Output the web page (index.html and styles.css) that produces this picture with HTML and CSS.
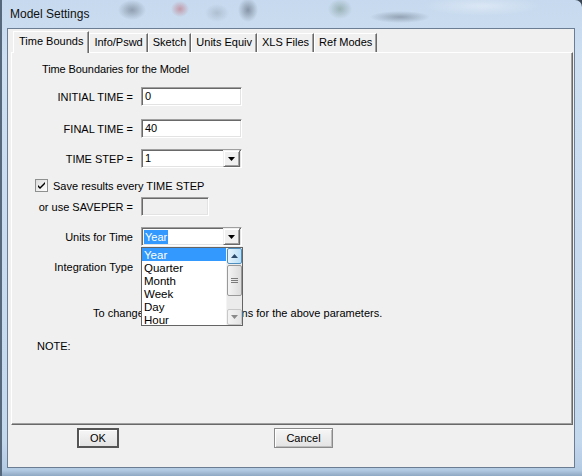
FILE: index.html
```html
<!DOCTYPE html>
<html>
<head>
<meta charset="utf-8">
<title>Model Settings</title>
<link rel="stylesheet" href="styles.css">
</head>
<body>
<div class="window">
  <div class="titlebar"><span class="title">Model Settings</span></div>
  <div class="client">
    <div class="tabs">
      <div class="tab active">Time Bounds</div>
      <div class="tab">Info/Pswd</div>
      <div class="tab">Sketch</div>
      <div class="tab">Units Equiv</div>
      <div class="tab">XLS Files</div>
      <div class="tab">Ref Modes</div>
    </div>
    <div class="panel">
      <div class="heading">Time Boundaries for the Model</div>
      <div class="form">
        <div class="row r1">
          <span class="label">INITIAL TIME =</span>
          <div class="field text">0</div>
        </div>
        <div class="row r2">
          <span class="label">FINAL TIME =</span>
          <div class="field text">40</div>
        </div>
        <div class="row r3">
          <span class="label">TIME STEP =</span>
          <div class="field combo"><span class="value">1</span><span class="dropbtn"><svg width="7" height="4" viewBox="0 0 7 4"><path d="M0 0h7L3.5 4z" fill="#000"/></svg></span></div>
        </div>
        <div class="row check-row">
          <span class="checkbox"><svg width="9" height="9" viewBox="0 0 9 9"><path d="M1 4l2 2 5-5v2L3 8 1 6z" fill="#000"/></svg></span>
          <span>Save results every TIME STEP</span>
        </div>
        <div class="row r5">
          <span class="label">or use SAVEPER =</span>
          <div class="field text disabled"></div>
        </div>
        <div class="row r6">
          <span class="label">Units for Time</span>
          <div class="combo-wrap">
            <div class="field combo"><span class="value selected">Year</span><span class="dropbtn"><svg width="7" height="4" viewBox="0 0 7 4"><path d="M0 0h7L3.5 4z" fill="#000"/></svg></span></div>
            <div class="dropdown">
              <ul class="items">
                <li class="hl">Year</li>
                <li>Quarter</li>
                <li>Month</li>
                <li>Week</li>
                <li>Day</li>
                <li>Hour</li>
              </ul>
              <div class="scrollbar">
                <span class="sb-btn up"><svg width="7" height="4" viewBox="0 0 7 4"><path d="M0 4h7L3.5 0z" fill="#2b4a6a"/></svg></span>
                <span class="thumb"><svg width="7" height="6" viewBox="0 0 7 6"><path d="M0 0.5h7M0 2.5h7M0 4.5h7" stroke="#7a7a7a" stroke-width="1"/></svg></span>
                <span class="track"></span>
                <span class="sb-btn down"><svg width="7" height="4" viewBox="0 0 7 4"><path d="M0 0h7L3.5 4z" fill="#8a8a8a"/></svg></span>
              </div>
            </div>
          </div>
        </div>
        <div class="row r7">
          <span class="label">Integration Type</span>
          <div class="field combo"><span class="value"></span><span class="dropbtn"><svg width="7" height="4" viewBox="0 0 7 4"><path d="M0 0h7L3.5 4z" fill="#000"/></svg></span></div>
        </div>
      </div>
      <p class="change">To change the simulation options for the above parameters.</p>
      <p class="note">NOTE:</p>
    </div>
    <div class="buttons">
      <button class="btn default">OK</button>
      <button class="btn cancel">Cancel</button>
    </div>
  </div>
</div>
</body>
</html>
```

FILE: styles.css
```css
* { box-sizing: border-box; }
html, body { margin: 0; padding: 0; }
body {
  width: 582px;
  height: 476px;
  overflow: hidden;
  background: #3a4654;
  font-family: "Liberation Sans", Arial, sans-serif;
  font-size: 11px;
  color: #000;
}
.window {
  width: 582px;
  height: 476px;
  display: flex;
  flex-direction: column;
  border-left: 2px solid #56687b;
  border-radius: 0 7px 0 0;
  background: linear-gradient(to bottom, #c6d9ee 0, #cddff1 60px, #c4d8ed 440px, #b4cbe4 470px, #8ea7c2 476px);
}
.titlebar {
  height: 28px;
  flex: none;
  display: flex;
  align-items: center;
  padding-left: 8px;
  background:
    radial-gradient(ellipse 14px 10px at 130px 10px, rgba(90,100,115,0.5), rgba(90,100,115,0) 100%),
    radial-gradient(ellipse 9px 8px at 178px 9px, rgba(190,90,100,0.5), rgba(190,90,100,0) 100%),
    radial-gradient(ellipse 12px 9px at 215px 13px, rgba(120,130,145,0.3), rgba(120,130,145,0) 100%),
    radial-gradient(ellipse 10px 12px at 246px 10px, rgba(70,80,95,0.5), rgba(70,80,95,0) 100%),
    radial-gradient(ellipse 12px 10px at 338px 9px, rgba(90,120,100,0.4), rgba(90,120,100,0) 100%),
    radial-gradient(ellipse 30px 6px at 398px 17px, rgba(70,80,95,0.4), rgba(70,80,95,0) 100%),
    radial-gradient(ellipse 60px 10px at 480px 6px, rgba(255,255,255,0.35), rgba(255,255,255,0) 100%);
}
.title { font-size: 12px; color: #111; }
.client {
  flex: 1;
  margin: 0 7px 8px 5px;
  border: 1px solid #6b7d92;
  background: #f0f0f0;
  padding: 2px 1px 0 3px;
  display: flex;
  flex-direction: column;
}
.tabs {
  height: 21px;
  display: flex;
  align-items: flex-end;
  padding-left: 2px;
  position: relative;
  z-index: 2;
}
.tab {
  height: 19px;
  line-height: 17px;
  padding: 0 4px;
  border-top: 1px solid #fff;
  border-left: 1px solid #fff;
  border-right: 1px solid #696969;
  box-shadow: inset -1px 0 0 #a0a0a0;
  background: #f0f0f0;
  white-space: nowrap;
}
.tab.active {
  height: 22px;
  line-height: 19px;
  margin-bottom: -1px;
  padding: 0 5px;
}
.panel {
  height: 373px;
  border: 1px solid;
  border-color: #fff #696969 #696969 #fff;
  box-shadow: inset -1px -1px 0 #a0a0a0;
  display: flex;
  flex-direction: column;
}
.heading {
  margin: 10px 0 0 30px;
  line-height: 13px;
  letter-spacing: -0.1px;
}
.form {
  margin-top: 11px;
  display: flex;
  flex-direction: column;
}
.row {
  display: flex;
  align-items: center;
  height: 19px;
}
.r2 { margin-top: 13px; }
.r3 { margin-top: 11px; }
.check-row { margin-top: 11px; height: 13px; padding-left: 23px; gap: 5px; }
.r5 { margin-top: 5px; }
.r6 { margin-top: 11px; }
.r7 { margin-top: 11px; }
.label {
  width: 121px;
  text-align: right;
  margin-right: 8px;
  white-space: nowrap;
}
.field {
  width: 101px;
  height: 19px;
  background: #fff;
  border-top: 1px solid #a0a0a0;
  border-left: 1px solid #a0a0a0;
  border-right: 1px solid #fff;
  border-bottom: 1px solid #fff;
  box-shadow: inset 1px 1px 0 #696969, inset -1px -1px 0 #e3e3e3;
  padding: 0 0 0 3px;
  line-height: 17px;
  display: flex;
  align-items: center;
}
.field.disabled {
  width: 68px;
  background: #f0f0f0;
}
.combo { position: relative; }
.combo .value { flex: 1; }
.combo .value.selected { flex: none; background: #3399ff; color: #fff; line-height: 14px; padding: 0 1px; margin-left: -1px; }
.dropbtn {
  margin-left: auto;
  width: 17px;
  height: 17px;
  align-self: flex-start;
  background: #f0f0f0;
  border: 1px solid;
  border-color: #f0f0f0 #696969 #696969 #f0f0f0;
  box-shadow: inset 1px 1px 0 #fff, inset -1px -1px 0 #a0a0a0;
  display: flex;
  align-items: center;
  justify-content: center;
  margin-right: 1px;
}
.combo-wrap { position: relative; }
.dropdown {
  position: absolute;
  left: 0;
  top: 20px;
  width: 102px;
  height: 79px;
  background: #fff;
  border: 1px solid #646464;
  display: flex;
  z-index: 5;
}
.items {
  list-style: none;
  margin: 0;
  padding: 0;
  flex: 1;
}
.items li {
  height: 13px;
  line-height: 14px;
  padding-left: 2px;
  font-size: 11.5px;
}
.items li.hl { background: #3399ff; color: #fff; }
.scrollbar {
  width: 16px;
  display: flex;
  flex-direction: column;
  background: #ebebeb;
  border-left: 1px solid #f4f4f4;
}
.sb-btn {
  height: 16px;
  flex: none;
  display: flex;
  align-items: center;
  justify-content: center;
  border: 1px solid #c8c8c8;
  border-radius: 2px;
  background: linear-gradient(to right, #f4f4f4, #e4e4e4);
}
.sb-btn.up {
  border-color: #4e8fbf;
  background: linear-gradient(to right, #e6f4fc, #b9dff6);
}
.thumb {
  height: 31px;
  flex: none;
  margin-top: 1px;
  border: 1px solid #999;
  border-radius: 2px;
  background: linear-gradient(to right, #f4f4f4, #dcdcdc);
  display: flex;
  align-items: center;
  justify-content: center;
}
.track { flex: 1; }
.checkbox {
  width: 13px;
  height: 13px;
  border: 1px solid #8e8f8f;
  background: linear-gradient(135deg, #dcdcdc, #fff);
  display: flex;
  align-items: center;
  justify-content: center;
}
.change {
  margin: 31px 0 0 81px;
  line-height: 13px;
}
.note {
  margin: 20px 0 0 25px;
  line-height: 13px;
}
.buttons {
  display: flex;
  margin-top: 3px;
  padding-left: 66px;
  gap: 155px;
}
.btn {
  height: 20px;
  font-family: "Liberation Sans", Arial, sans-serif;
  font-size: 11px;
  color: #000;
  padding: 0;
  background: linear-gradient(#f6f6f6, #e3e3e3);
  border: 1px solid #707070;
  border-radius: 0;
}
.btn.default {
  width: 42px;
  border: 2px solid #555;
  box-shadow: inset 1px 1px 0 #fff;
}
.btn.cancel {
  width: 59px;
  border-color: #8a8a8a;
  box-shadow: inset 1px 1px 0 #fff, inset -1px -1px 0 #bdbdbd;
}
```
